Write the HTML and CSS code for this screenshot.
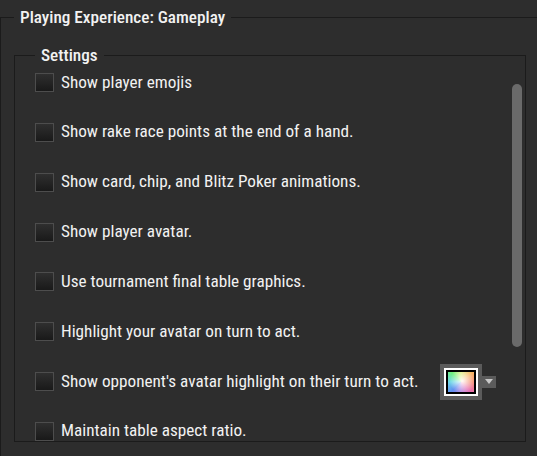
FILE: index.html
```html
<!DOCTYPE html>
<html>
<head>
<meta charset="utf-8">
<link rel="stylesheet" href="styles.css">
</head>
<body>
<fieldset class="group">
  <legend class="group-title">Playing Experience: Gameplay</legend>
  <fieldset class="settings">
    <legend class="settings-title">Settings</legend>
    <div class="settings-body">
      <div class="list">
        <label class="row"><span class="check"></span><span class="text">Show player emojis</span></label>
        <label class="row"><span class="check"></span><span class="text">Show rake race points at the end of a hand.</span></label>
        <label class="row"><span class="check"></span><span class="text">Show card, chip, and Blitz Poker animations.</span></label>
        <label class="row"><span class="check"></span><span class="text">Show player avatar.</span></label>
        <label class="row"><span class="check"></span><span class="text">Use tournament final table graphics.</span></label>
        <label class="row"><span class="check"></span><span class="text">Highlight your avatar on turn to act.</span></label>
        <label class="row"><span class="check"></span><span class="text">Show opponent's avatar highlight on their turn to act.</span>
          <span class="picker"><span class="swatch"><span class="swatch-frame"><span class="swatch-color"></span></span></span><span class="drop"><span class="tri"></span></span></span>
        </label>
        <label class="row"><span class="check"></span><span class="text">Maintain table aspect ratio.</span></label>
      </div>
      <div class="track"><div class="thumb"></div></div>
    </div>
  </fieldset>
</fieldset>
</body>
</html>
```
FILE: styles.css
```css
html, body {
  margin: 0;
  padding: 0;
  overflow: hidden;
  background: #2d2d2d;
  height: 456px;
}
body {
  font-family: "Roboto Condensed", "Roboto", sans-serif;
  font-stretch: condensed;
  font-size: 17.2px;
  color: #f2f2f2;
}
.group {
  margin: 6px 0 0 0;
  padding: 16px 0 0 13px;
  border: 1px solid #1b1b1b;
  width: 620px;
  height: 560px;
  box-sizing: border-box;
  min-inline-size: 0;
}
.group-title,
.settings-title {
  padding: 0 6px;
  line-height: 22px;
  font-weight: 500;
}
.settings {
  margin: 0;
  padding: 0 0 0 20px;
  border: 1px solid #1b1b1b;
  width: 512px;
  box-sizing: border-box;
  min-inline-size: 0;
}
.settings-body {
  display: flex;
  height: 375px;
  overflow: hidden;
}
.list {
  flex: 1;
  display: flex;
  flex-direction: column;
  gap: 30.85px;
  padding-top: 7px;
}
.row {
  display: flex;
  align-items: center;
  height: 19px;
  flex: none;
}
.check {
  width: 19px;
  height: 19px;
  box-sizing: border-box;
  border: 1px solid #4d4d4d;
  background: linear-gradient(#2f2f2f, #191919);
  flex: none;
}
.text {
  margin-left: 7px;
  margin-bottom: 2px;
  white-space: nowrap;
}
.picker {
  display: flex;
  align-items: center;
  margin-left: 21px;
}
.swatch {
  background: #5b5b5b;
  padding: 4px;
  width: 42px;
  height: 36px;
  box-sizing: border-box;
}
.swatch-frame {
  display: block;
  width: 100%;
  height: 100%;
  box-sizing: border-box;
  border: 2px solid #ffffff;
}
.swatch-color {
  display: block;
  width: 100%;
  height: 100%;
  box-sizing: border-box;
  border: 2px solid #000000;
  background:
    radial-gradient(circle at 55% 45%, rgba(255,255,255,0.95) 0%, rgba(255,255,255,0.55) 30%, rgba(255,255,255,0) 70%),
    conic-gradient(from 0deg, #d8f070, #f5b860 45deg, #f58a70 90deg, #e870b0 135deg, #b080e0 180deg, #6090f0 225deg, #70d8e8 270deg, #70f080 315deg, #d8f070);
}
.drop {
  width: 14px;
  height: 12px;
  background: #5b5b5b;
  display: flex;
  align-items: center;
  justify-content: center;
}
.tri {
  width: 0;
  height: 0;
  border-left: 4px solid transparent;
  border-right: 4px solid transparent;
  border-top: 5px solid #c8c8c8;
}
.track {
  width: 10px;
  margin-right: 3px;
  flex: none;
}
.thumb {
  margin-top: 18px;
  height: 263px;
  border-radius: 5px;
  background: #6a6a6a;
}
```
